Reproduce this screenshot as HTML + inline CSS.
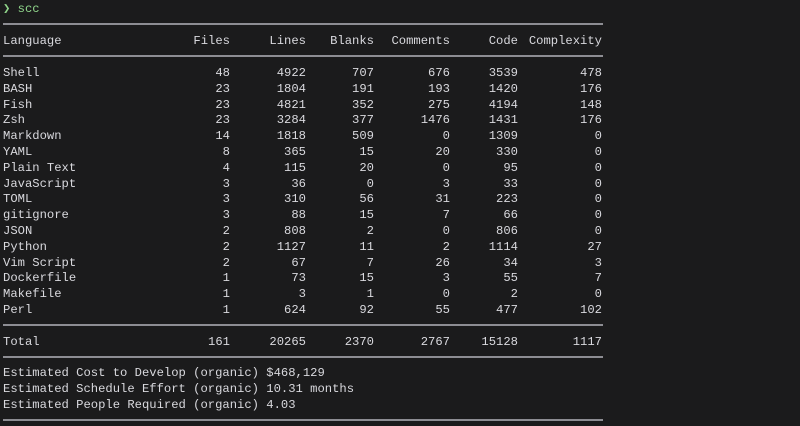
<!DOCTYPE html>
<html><head><meta charset="utf-8"><style>
html,body{margin:0;padding:0;background:#1b1b1c;width:800px;height:426px;overflow:hidden}
body{font-family:"Liberation Mono","DejaVu Sans Mono",monospace;font-size:12.2px;color:#d9d9de;position:relative}
.r{position:absolute;left:0;width:800px;height:16px;line-height:16px;white-space:pre}
.r span{position:absolute;top:0}
.l{left:3px}
.hr{position:absolute;left:3px;width:600px;height:2px;background:#8d8d93}
.g{color:#8fd48a}
</style></head><body>
<div class="r" style="top:1px"><span class="l g">❯ scc</span></div>
<div class="hr" style="top:23px"></div>
<div class="hr" style="top:55px"></div>
<div class="hr" style="top:324px"></div>
<div class="hr" style="top:356px"></div>
<div class="hr" style="top:419px"></div>
<div id="rows"></div>
<script>
(function(){
var rows=[
["Language","Files","Lines","Blanks","Comments","Code","Complexity"],
null,
["Shell",48,4922,707,676,3539,478],
["BASH",23,1804,191,193,1420,176],
["Fish",23,4821,352,275,4194,148],
["Zsh",23,3284,377,1476,1431,176],
["Markdown",14,1818,509,0,1309,0],
["YAML",8,365,15,20,330,0],
["Plain Text",4,115,20,0,95,0],
["JavaScript",3,36,0,3,33,0],
["TOML",3,310,56,31,223,0],
["gitignore",3,88,15,7,66,0],
["JSON",2,808,2,0,806,0],
["Python",2,1127,11,2,1114,27],
["Vim Script",2,67,7,26,34,3],
["Dockerfile",1,73,15,3,55,7],
["Makefile",1,3,1,0,2,0],
["Perl",1,624,92,55,477,102],
null,
["Total",161,20265,2370,2767,15128,1117],
null,
["Estimated Cost to Develop (organic) $468,129"],
["Estimated Schedule Effort (organic) 10.31 months"],
["Estimated People Required (organic) 4.03"]
];
var ends=[230,306,374,450,518,602];
var h="";
for(var i=0;i<rows.length;i++){
 var r=rows[i]; if(!r) continue;
 var y=(2+i)*15.8+1.8;
 h+='<div class="r" style="top:'+y+'px"><span class="l">'+r[0]+'</span>';
 for(var j=1;j<r.length;j++){h+='<span style="right:'+(800-ends[j-1])+'px">'+r[j]+'</span>';}
 h+='</div>';
}
document.getElementById("rows").outerHTML=h;
})();
</script>
</body></html>
